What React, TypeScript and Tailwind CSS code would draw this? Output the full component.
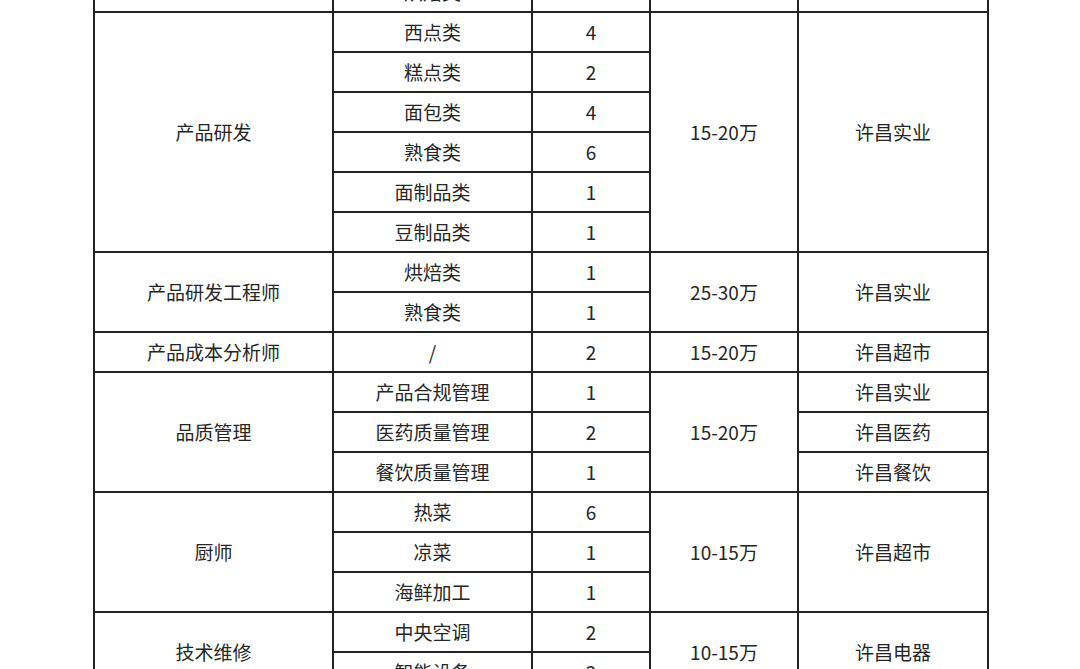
import React from "react";

const cell = "border-2 border-[#222] text-center align-middle p-0";

export default function App() {
  return (
    <div className="w-[1080px] h-[669px] overflow-hidden bg-white font-['Noto_Sans_CJK_SC','Noto_Sans',sans-serif] text-[19px] text-[#262626]">
      <table className="ml-[93px] mt-[-29px] border-collapse table-fixed w-[894px]">
        <colgroup>
          <col className="w-[239px]" />
          <col className="w-[199px]" />
          <col className="w-[118px]" />
          <col className="w-[148px]" />
          <col className="w-[190px]" />
        </colgroup>
        <tbody>
          <tr className="h-[40px]">
            <td className={cell}></td>
            <td className={cell}>烘焙类</td>
            <td className={cell}>2</td>
            <td className={cell}></td>
            <td className={cell}></td>
          </tr>
          <tr className="h-[40px]">
            <td className={cell} rowSpan={6}>产品研发</td>
            <td className={cell}>西点类</td>
            <td className={cell}>4</td>
            <td className={cell} rowSpan={6}>15-20万</td>
            <td className={cell} rowSpan={6}>许昌实业</td>
          </tr>
          <tr className="h-[40px]">
            <td className={cell}>糕点类</td>
            <td className={cell}>2</td>
          </tr>
          <tr className="h-[40px]">
            <td className={cell}>面包类</td>
            <td className={cell}>4</td>
          </tr>
          <tr className="h-[40px]">
            <td className={cell}>熟食类</td>
            <td className={cell}>6</td>
          </tr>
          <tr className="h-[40px]">
            <td className={cell}>面制品类</td>
            <td className={cell}>1</td>
          </tr>
          <tr className="h-[40px]">
            <td className={cell}>豆制品类</td>
            <td className={cell}>1</td>
          </tr>
          <tr className="h-[40px]">
            <td className={cell} rowSpan={2}>产品研发工程师</td>
            <td className={cell}>烘焙类</td>
            <td className={cell}>1</td>
            <td className={cell} rowSpan={2}>25-30万</td>
            <td className={cell} rowSpan={2}>许昌实业</td>
          </tr>
          <tr className="h-[40px]">
            <td className={cell}>熟食类</td>
            <td className={cell}>1</td>
          </tr>
          <tr className="h-[40px]">
            <td className={cell}>产品成本分析师</td>
            <td className={cell}>/</td>
            <td className={cell}>2</td>
            <td className={cell}>15-20万</td>
            <td className={cell}>许昌超市</td>
          </tr>
          <tr className="h-[40px]">
            <td className={cell} rowSpan={3}>品质管理</td>
            <td className={cell}>产品合规管理</td>
            <td className={cell}>1</td>
            <td className={cell} rowSpan={3}>15-20万</td>
            <td className={cell}>许昌实业</td>
          </tr>
          <tr className="h-[40px]">
            <td className={cell}>医药质量管理</td>
            <td className={cell}>2</td>
            <td className={cell}>许昌医药</td>
          </tr>
          <tr className="h-[40px]">
            <td className={cell}>餐饮质量管理</td>
            <td className={cell}>1</td>
            <td className={cell}>许昌餐饮</td>
          </tr>
          <tr className="h-[40px]">
            <td className={cell} rowSpan={3}>厨师</td>
            <td className={cell}>热菜</td>
            <td className={cell}>6</td>
            <td className={cell} rowSpan={3}>10-15万</td>
            <td className={cell} rowSpan={3}>许昌超市</td>
          </tr>
          <tr className="h-[40px]">
            <td className={cell}>凉菜</td>
            <td className={cell}>1</td>
          </tr>
          <tr className="h-[40px]">
            <td className={cell}>海鲜加工</td>
            <td className={cell}>1</td>
          </tr>
          <tr className="h-[40px]">
            <td className={cell} rowSpan={2}>技术维修</td>
            <td className={cell}>中央空调</td>
            <td className={cell}>2</td>
            <td className={cell} rowSpan={2}>10-15万</td>
            <td className={cell} rowSpan={2}>许昌电器</td>
          </tr>
          <tr className="h-[40px]">
            <td className={cell}>智能设备</td>
            <td className={cell}>2</td>
          </tr>
        </tbody>
      </table>
    </div>
  );
}
